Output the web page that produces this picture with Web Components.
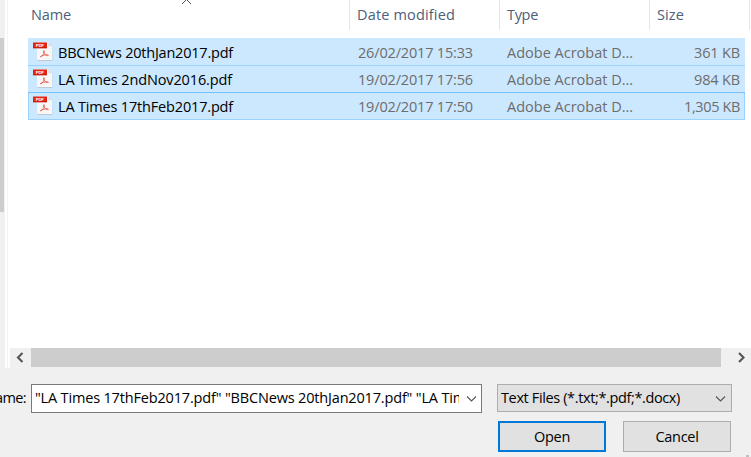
<!DOCTYPE html>
<html lang="en"><head><meta charset="utf-8"><title>Open</title>
<style>html,body{margin:0;width:751px;height:457px;overflow:hidden;background:#f0f0f0}</style></head><body>
<open-dialog></open-dialog>
<script>
const define=(name,html,init)=>customElements.define(name,class extends HTMLElement{
  constructor(){super();this.attachShadow({mode:'open'});this.shadowRoot.innerHTML=html}
  connectedCallback(){if(init)init(this,this.shadowRoot)}
});
// A single line of text spaced to a given advance width.
define('fit-text','<style>:host{display:block;white-space:nowrap;height:20px;line-height:20px}span{display:inline-block}</style><span></span>',(h,r)=>{
  const s=r.querySelector('span');s.textContent=h.getAttribute('text');
  const want=+h.getAttribute('w'),got=s.getBoundingClientRect().width;
  s.style.letterSpacing=((want-got)/s.textContent.length)+'px';
});
define('pdf-icon',`<style>:host{display:block;width:20px;height:20px}svg{display:block}</style>
<svg width="20" height="20" viewBox="0 0 20 20"><path d="M4.5 1.5h11l3.7 4v13.3H4.5z" fill="#b9c0c6"/><path d="M4 .5h11.3l3.7 3.8V18H4z" fill="#f8f7f7"/><path d="M15.3.5v3.8H19z" fill="#d7d9dc"/><path d="M0 .5h14v5.7H0z" fill="#e32313"/><path d="M0 5.3h14v.9H0z" fill="#bf1d10"/><text x="2.8" y="4.9" font-family="Liberation Sans,sans-serif" font-weight="700" font-size="4.4" fill="#fff" textLength="8.2">PDF</text><path d="M8 14.9c1.2-.6 3.2-3.2 3.3-5.1.1-1.8-1.1-1.5-.8 0 .4 1.8 2.2 3.4 3.9 3.8 1.4.3 1.3-.8-.1-.8-2.3 0-4.9.6-6.3 1.4-.8.5-.7 1 0 .7z" fill="none" stroke="#ee5a50" stroke-width=".9"/></svg>`);
define('column-head','<style>:host{display:block;box-sizing:border-box;height:30px;padding:5px 0 0 7px;color:#4c607a;border-right:1px solid #e5e5e5}</style><slot></slot>');
define('file-row',`<style>:host{display:grid;grid-template-columns:30px 300px 149px 143px 95px;box-sizing:border-box;width:717px;height:27px;background:#cce8ff;border-bottom:1px solid #99d1ff;color:#6d6d6d}
:host([first]){height:28px;padding-top:1px}
:host([next-focus]){border-bottom-color:#77bfff}
:host([focused]){border:1px solid #99d1ff;border-top:0;grid-template-columns:29px 300px 149px 143px 94px}
pdf-icon{margin:3px 0 0 5px}:host([focused]) pdf-icon{margin-left:4px}fit-text{margin-top:4px}.n{color:#000}.s{justify-self:end;margin-right:5px}:host([focused]) .s{margin-right:4px}</style>
<pdf-icon></pdf-icon><fit-text class="n"></fit-text><fit-text class="d" w="115"></fit-text><fit-text text="Adobe Acrobat D..." w="127"></fit-text><fit-text class="s"></fit-text>`,(h,r)=>{
  for(const [c,k] of [['n','name'],['d','date'],['s','size']])r.querySelector('.'+c).setAttribute('text',h.getAttribute(k));
  r.querySelector('.n').setAttribute('w',h.getAttribute('nw'));r.querySelector('.s').setAttribute('w',h.getAttribute('sw'));
  r.querySelectorAll('fit-text').forEach(e=>e.connectedCallback());
});
define('chevron-icon',`<style>:host{display:block;width:11px;height:8px}svg{display:block}</style><svg width="11" height="8"><path d="M1 1.5l4.5 4.5L10 1.5" fill="none" stroke="#555" stroke-width="1.1"/></svg>`);
define('h-scrollbar',`<style>:host{display:grid;grid-template-columns:21px 690px 30px;height:20px;background:#f0f0f0}i{display:block;height:19px;background:#cdcdcd}svg{display:block}</style>
<svg width="21" height="19"><path d="M12.5 5L8 9.5l4.5 4.5" fill="none" stroke="#555" stroke-width="2.1"/></svg><i></i><svg width="30" height="19"><path d="M18 5l4.5 4.5L18 14" fill="none" stroke="#555" stroke-width="2.1"/></svg>`);
define('select-box',`<style>:host{display:flex;box-sizing:border-box;justify-content:space-between;height:28px;border:1px solid #adadad;background:#e1e1e1;padding:3px 5px 0 3px}
:host([editable]){height:29px;border-color:#7a7a7a;background:#fff;padding-right:4px}div{overflow:hidden;height:22px}:host([editable]) div{width:424px}chevron-icon{margin-top:7px}</style><div><slot></slot></div><chevron-icon></chevron-icon>`);
define('push-button',`<style>:host{display:flex;justify-content:center;box-sizing:border-box;width:108px;height:31px;padding-top:5px;border:1px solid #adadad;background:#e1e1e1}:host([primary]){border:2px solid #0078d7;padding-top:4px}</style><slot></slot>`);
define('open-dialog',`<style>
:host{display:grid;grid-template-rows:368px 89px;width:751px;height:457px;overflow:hidden;background:#f0f0f0;font:14.5px "Open Sans","Noto Sans",sans-serif;font-stretch:93%;color:#000}
.top{display:grid;grid-template-columns:5px 2px 1px 2px 741px;background:#fff}
.track{background:#f0f0f0}.thumb{height:174px;margin-top:38px;background:#cdcdcd;width:4px}
.top>b{background:#f2f2f2}
.pane{display:grid;grid-template-rows:30px 318px 20px}
.heads{display:grid;grid-template-columns:340px 150px 150px 100px;position:relative}
.heads column-head:first-child{padding-left:21px}
.sort{position:absolute;left:171px;top:-1px}
.rows{padding:8px 0 0 18px}
.bottom{display:grid;grid-template-columns:31px 451px 15px 254px;padding-top:16px}
.lab{display:flex;justify-content:flex-end;padding:4px 5px 0 0;overflow:hidden}
.right{display:grid;grid-template-rows:28px 9px 31px;width:235px}
.buttons{display:flex;gap:17px;padding-left:1px;grid-row:3}
.grip{position:absolute;left:746px;top:455px;width:3px;height:2px;background:#bfbfbf}
</style>
<div class="top"><div class="track"><div class="thumb"></div></div><span></span><b></b><span></span>
<div class="pane"><div class="heads"><column-head><fit-text text="Name" w="40"></fit-text></column-head><column-head><fit-text text="Date modified" w="98"></fit-text></column-head><column-head><fit-text text="Type" w="31"></fit-text></column-head><column-head><fit-text text="Size" w="27"></fit-text></column-head>
<svg class="sort" width="12" height="6"><path d="M1 5l4.5-4.5L10 5" fill="none" stroke="#555"/></svg></div>
<div class="rows"><file-row first name="BBCNews 20thJan2017.pdf" nw="175" date="26/02/2017 15:33" size="361 KB" sw="46"></file-row><file-row next-focus name="LA Times 2ndNov2016.pdf" nw="174" date="19/02/2017 17:56" size="984 KB" sw="46"></file-row><file-row focused name="LA Times 17thFeb2017.pdf" nw="175" date="19/02/2017 17:50" size="1,305 KB" sw="56"></file-row></div>
<h-scrollbar></h-scrollbar></div></div>
<div class="bottom"><div class="lab"><fit-text text="ame:" w="31"></fit-text></div>
<select-box editable><fit-text text='"LA Times 17thFeb2017.pdf" "BBCNews 20thJan2017.pdf" "LA Tim' w="431"></fit-text></select-box><span></span>
<div class="right"><select-box><fit-text text="Text Files (*.txt;*.pdf;*.docx)" w="179"></fit-text></select-box><div class="buttons"><push-button primary><fit-text text="Open" w="36"></fit-text></push-button><push-button><fit-text text="Cancel" w="43"></fit-text></push-button></div></div></div><div class="grip"></div>`);
</script></body></html>
